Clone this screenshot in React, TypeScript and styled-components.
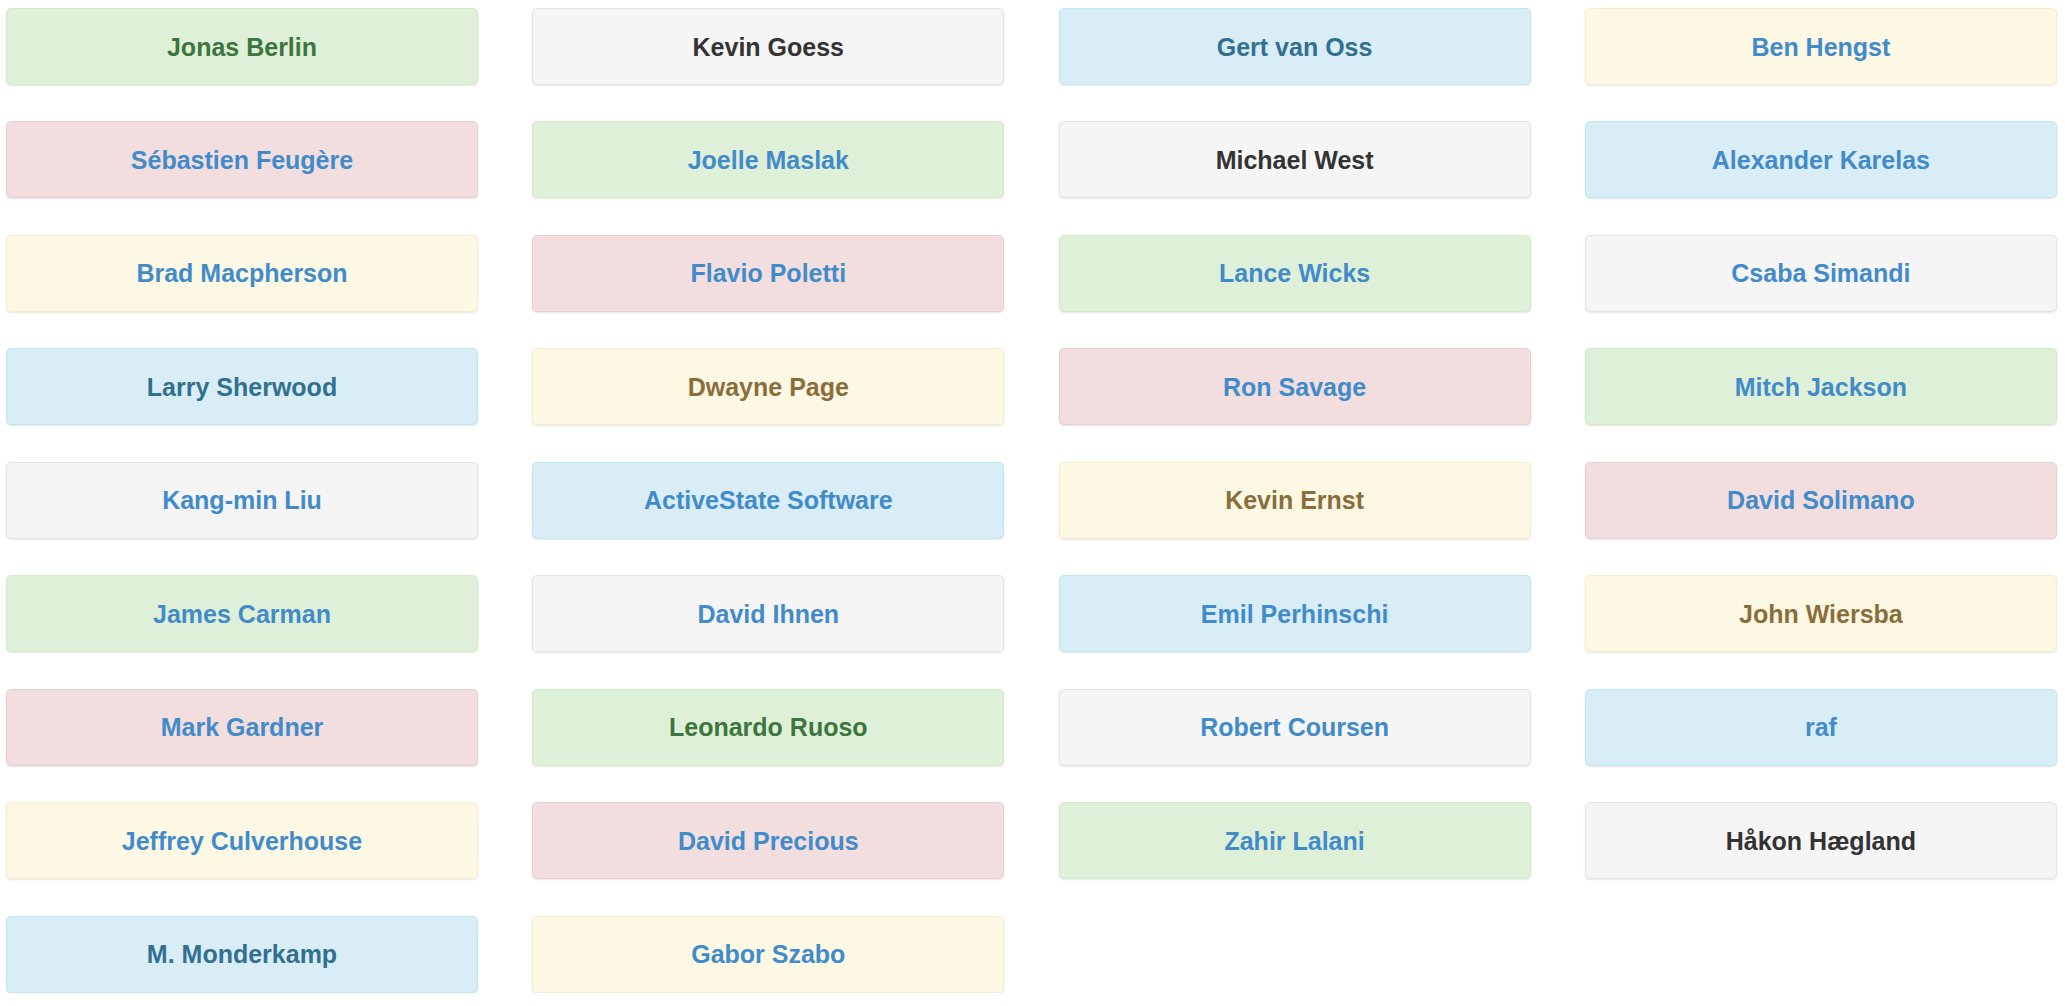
import React from "react";
import styled, { createGlobalStyle } from "styled-components";

const GlobalStyle = createGlobalStyle`
  html, body {
    margin: 0;
    padding: 0;
    background: #ffffff;
  }
  body {
    font-family: "Liberation Sans", Arial, Helvetica, sans-serif;
  }
`;

type Variant = "success" | "well" | "info" | "warning" | "danger";
type Tone = "link" | "own" | "dark";

const palette: Record<Variant, { bg: string; border: string; text: string }> = {
  success: { bg: "#dff0d8", border: "#d6e9c6", text: "#3c763d" },
  well: { bg: "#f5f5f5", border: "#e3e3e3", text: "#333333" },
  info: { bg: "#d9edf7", border: "#bce8f1", text: "#31708f" },
  warning: { bg: "#fcf8e3", border: "#faebcc", text: "#8a6d3b" },
  danger: { bg: "#f2dede", border: "#ebccd1", text: "#a94442" },
};

const order: Variant[] = ["success", "well", "info", "warning", "danger"];

const sponsors: { name: string; tone: Tone }[] = [
  { name: "Jonas Berlin", tone: "own" },
  { name: "Kevin Goess", tone: "dark" },
  { name: "Gert van Oss", tone: "own" },
  { name: "Ben Hengst", tone: "link" },
  { name: "Sébastien Feugère", tone: "link" },
  { name: "Joelle Maslak", tone: "link" },
  { name: "Michael West", tone: "dark" },
  { name: "Alexander Karelas", tone: "link" },
  { name: "Brad Macpherson", tone: "link" },
  { name: "Flavio Poletti", tone: "link" },
  { name: "Lance Wicks", tone: "link" },
  { name: "Csaba Simandi", tone: "link" },
  { name: "Larry Sherwood", tone: "own" },
  { name: "Dwayne Page", tone: "own" },
  { name: "Ron Savage", tone: "link" },
  { name: "Mitch Jackson", tone: "link" },
  { name: "Kang-min Liu", tone: "link" },
  { name: "ActiveState Software", tone: "link" },
  { name: "Kevin Ernst", tone: "own" },
  { name: "David Solimano", tone: "link" },
  { name: "James Carman", tone: "link" },
  { name: "David Ihnen", tone: "link" },
  { name: "Emil Perhinschi", tone: "link" },
  { name: "John Wiersba", tone: "own" },
  { name: "Mark Gardner", tone: "link" },
  { name: "Leonardo Ruoso", tone: "own" },
  { name: "Robert Coursen", tone: "link" },
  { name: "raf", tone: "link" },
  { name: "Jeffrey Culverhouse", tone: "link" },
  { name: "David Precious", tone: "link" },
  { name: "Zahir Lalani", tone: "link" },
  { name: "Håkon Hægland", tone: "dark" },
  { name: "M. Monderkamp", tone: "own" },
  { name: "Gabor Szabo", tone: "link" },
];

const Page = styled.div`
  padding: 8px 0 0 6px;
`;

const Grid = styled.div`
  display: grid;
  grid-template-columns: repeat(4, 472px);
  grid-auto-rows: 77px;
  column-gap: 54.3px;
  row-gap: 36.45px;
`;

const Card = styled.div<{ $variant: Variant }>`
  box-sizing: border-box;
  display: flex;
  align-items: center;
  justify-content: center;
  padding-top: 1px;
  background: ${(p) => palette[p.$variant].bg};
  border: 1px solid ${(p) => palette[p.$variant].border};
  border-radius: 5px;
  box-shadow: 0 1px 2px rgba(0, 0, 0, 0.1);
`;

const Name = styled.span<{ $variant: Variant; $tone: Tone }>`
  font-family: "Liberation Sans", Arial, Helvetica, sans-serif;
  font-weight: 700;
  font-size: 25px;
  line-height: 1;
  color: ${(p) =>
    p.$tone === "link"
      ? "#428bca"
      : p.$tone === "dark"
      ? "#333333"
      : palette[p.$variant].text};
`;

export default function App() {
  return (
    <>
      <GlobalStyle />
      <Page>
        <Grid>
          {sponsors.map((s, i) => {
            const v = order[i % order.length];
            return (
              <Card key={s.name} $variant={v}>
                <Name $variant={v} $tone={s.tone}>
                  {s.name}
                </Name>
              </Card>
            );
          })}
        </Grid>
      </Page>
    </>
  );
}
